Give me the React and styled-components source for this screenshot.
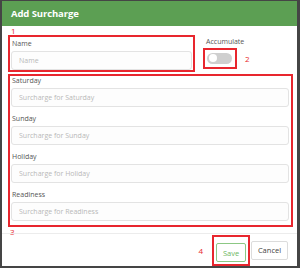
import React from "react";
import styled, { createGlobalStyle } from "styled-components";

const Global = createGlobalStyle`
  html, body { margin: 0; padding: 0; background: #454545; }
  body { font-family: "Open Sans", "Noto Sans", sans-serif; }
  * { box-sizing: border-box; }
`;

const Frame = styled.div`
  width: 300px;
  height: 268px;
  padding: 1px 3px 2px 2px;
  background: #454545;
`;

const Modal = styled.div`
  width: 295px;
  height: 265px;
  background: #fff;
  display: flex;
  flex-direction: column;
`;

const Header = styled.div`
  height: 27px;
  background: #5c9f53;
  color: #fff;
  font-weight: 700;
  font-size: 9.5px;
  display: flex;
  align-items: center;
  padding-left: 9px;
  letter-spacing: -0.1px;
`;

const Body = styled.div`
  padding: 0 4px 0 6px;
  display: flex;
  flex-direction: column;
`;

const Mark = styled.div`
  color: #e8262e;
  font-size: 8px;
  line-height: 9px;
  height: ${(p) => p.$h || 9}px;
  padding-left: ${(p) => p.$pl || 1}px;
`;

const TopRow = styled.div`
  display: flex;
  align-items: flex-start;
  gap: 8px;
`;

const RedBox = styled.div`
  border: 2px solid #e8262e;
`;

const NameBox = styled(RedBox)`
  width: 187px;
  height: 37px;
  padding: 0 1px;
  display: flex;
  flex-direction: column;
`;

const Label = styled.div`
  font-size: 7px;
  line-height: 9px;
  color: #555;
  padding-left: ${(p) => p.$pl ?? 0}px;
  margin-top: ${(p) => p.$mt ?? 0}px;
  margin-bottom: ${(p) => p.$mb ?? 0}px;
  white-space: nowrap;
`;

const Input = styled.input`
  display: block;
  width: 100%;
  height: 19px;
  border: 1px solid #e3e3e3;
  border-radius: 3px;
  background: #fdfdfd;
  padding: 0 7px;
  font-family: inherit;
  font-size: 7px;
  color: #444;
  outline: none;
  &::placeholder { color: #b8b8b8; }
`;

const AccCol = styled.div`
  display: flex;
  flex-direction: column;
  padding-top: 2px;
`;

const ToggleRow = styled.div`
  display: flex;
  align-items: center;
  gap: 7px;
  margin-top: 2px;
`;

const ToggleBox = styled(RedBox)`
  width: 34px;
  height: 21px;
  display: flex;
  align-items: center;
  padding-left: 2px;
`;

const Switch = styled.div`
  width: 25px;
  height: 11px;
  border-radius: 6px;
  background: #cfcfcf;
  position: relative;
`;

const Knob = styled.div`
  position: absolute;
  left: 2px;
  top: 1.5px;
  width: 8px;
  height: 8px;
  border-radius: 50%;
  background: #fff;
`;

const FieldsBox = styled(RedBox)`
  margin-top: 2px;
  width: 285px;
  height: 153px;
  padding: 0 2px 3px 1px;
  display: flex;
  flex-direction: column;
  gap: 7px;
`;

const Field = styled.div`
  display: flex;
  flex-direction: column;
`;

const Footer = styled.div`
  border-top: 1px solid #ececec;
  margin-top: auto;
  padding: 1px 9px 0 0;
  display: flex;
  justify-content: flex-end;
  align-items: center;
`;

const SaveBox = styled(RedBox)`
  padding: 2px;
  margin-left: 9px;
`;

const Button = styled.button`
  height: 19px;
  width: ${(p) => p.$w}px;
  border: 1px solid ${(p) => (p.$primary ? "#8cc884" : "#dcdcdc")};
  color: ${(p) => (p.$primary ? "#6db764" : "#444")};
  background: #fff;
  border-radius: 2px;
  font-family: inherit;
  font-size: 7.5px;
  padding: 0;
  cursor: pointer;
`;

const CancelButton = styled(Button)`
  margin-left: 1px;
`;

const days = ["Saturday", "Sunday", "Holiday", "Readiness"];

export default function App() {
  return (
    <>
      <Global />
      <Frame>
        <Modal>
          <Header>Add Surcharge</Header>
          <Body>
            <Mark $h={9} $pl={3}>1</Mark>
            <TopRow>
              <NameBox>
                <Label $pl={1} $mt={2} $mb={3}>Name</Label>
                <Input placeholder="Name" />
              </NameBox>
              <AccCol>
                <Label $pl={3}>Accumulate</Label>
                <ToggleRow>
                  <ToggleBox>
                    <Switch>
                      <Knob />
                    </Switch>
                  </ToggleBox>
                  <Mark $h={9} $pl={0}>2</Mark>
                </ToggleRow>
              </AccCol>
            </TopRow>
            <FieldsBox>
              {days.map((d, i) => (
                <Field key={d}>
                  <Label $pl={1} $mb={3}>{d}</Label>
                  <Input placeholder={`Surcharge for ${d}`} />
                </Field>
              ))}
            </FieldsBox>
            <Mark $h={6} $pl={2}>3</Mark>
          </Body>
          <Footer>
            <Mark $h={9} $pl={0}>4</Mark>
            <SaveBox>
              <Button $primary $w={30}>Save</Button>
            </SaveBox>
            <CancelButton $w={37}>Cancel</CancelButton>
          </Footer>
        </Modal>
      </Frame>
    </>
  );
}
